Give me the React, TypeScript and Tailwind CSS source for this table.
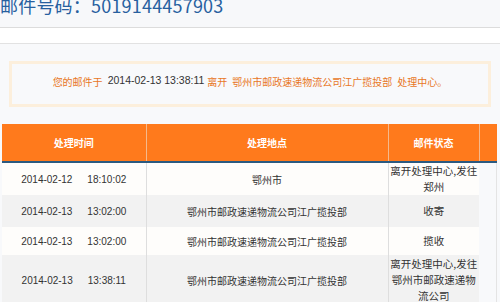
import React from "react";

const font = { fontFamily: '"Noto Sans CJK SC", "Liberation Sans", sans-serif' };
const latin = { fontFamily: '"Liberation Sans", sans-serif' };

type Row = { date: string; time: string; place: string; status: string[]; shade: boolean; h: string };

const rows: Row[] = [
  { date: "2014-02-12", time: "18:10:02", place: "鄂州市", status: ["离开处理中心,发往", "郑州"], shade: false, h: "h-[32px]" },
  { date: "2014-02-13", time: "13:02:00", place: "鄂州市邮政速递物流公司江广揽投部", status: ["收寄"], shade: true, h: "h-[32px]" },
  { date: "2014-02-13", time: "13:02:00", place: "鄂州市邮政速递物流公司江广揽投部", status: ["揽收"], shade: false, h: "h-[28px]" },
  { date: "2014-02-13", time: "13:38:11", place: "鄂州市邮政速递物流公司江广揽投部", status: ["离开处理中心,发往", "鄂州市邮政速递物", "流公司"], shade: true, h: "h-[50px]" },
];

export default function App() {
  return (
    <div className="w-[500px] h-[302px] overflow-hidden bg-[#f8f9fb]" style={font}>
      {/* title bar */}
      <div className="h-[28px] bg-[#f7f8fa] border-b border-[#dcdcdc] overflow-hidden">
        <div className="-mt-[9px] text-[18px] leading-[28px] text-[#27609f] tracking-[0.2px]">
          邮件号码：5019144457903
        </div>
      </div>
      <div className="h-[16px] bg-white border-b border-[#e2e2e2]" />

      {/* notice */}
      <div className="px-[9px] pt-[17px]">
        <div className="h-[46px] border-[3px] border-[#fcefdc] flex items-center justify-center text-[10px] text-[#e8771f] pb-[6px]">
          <span>您的邮件于</span>
          <span className="text-[#333] ml-[5px] text-[10.5px]" style={latin}>
            2014-02-13 13:38:11
          </span>
          <span className="ml-[3px]">离开</span>
          <span className="ml-[5px]">鄂州市邮政速递物流公司江广揽投部</span>
          <span className="ml-[5px]">处理中心。</span>
        </div>
      </div>

      {/* table */}
      <div className="pl-[2px] pr-[3px] pt-[17px]">
        <table className="w-full border-collapse table-fixed text-[10px] text-[#333]">
          <colgroup>
            <col className="w-[144px]" />
            <col className="w-[242px]" />
            <col className="w-[91px]" />
            <col />
          </colgroup>
          <thead>
            <tr className="h-[38px] bg-[#ff7a1c] text-white border-b-[2px] border-[#2c5a80]">
              <th className="border-r border-[#f5b98c] font-bold">处理时间</th>
              <th className="border-r border-[#f5b98c] font-bold">处理地点</th>
              <th className="border-r border-[#f5b98c] font-bold">邮件状态</th>
              <th />
            </tr>
          </thead>
          <tbody>
            {rows.map((r, i) => {
              const bg = r.shade ? "bg-[#f2f2f2]" : "bg-[#fefdfb]";
              return (
                <tr key={i} className={r.h}>
                  <td className={`${bg} text-center border-r border-[#dedede] text-[10px]`} style={latin}>
                    <span>{r.date}</span>
                    <span className="ml-[15px]">{r.time}</span>
                  </td>
                  <td className={`${bg} text-center border-r border-[#dedede]`}>{r.place}</td>
                  <td className={`${bg} text-center leading-[16px] text-[10.5px]`}>
                    {r.status.map((s, j) => (
                      <div key={j} className="whitespace-nowrap">{s}</div>
                    ))}
                  </td>
                  <td className="border-r border-[#e4e4e4]" />
                </tr>
              );
            })}
          </tbody>
        </table>
      </div>
    </div>
  );
}
